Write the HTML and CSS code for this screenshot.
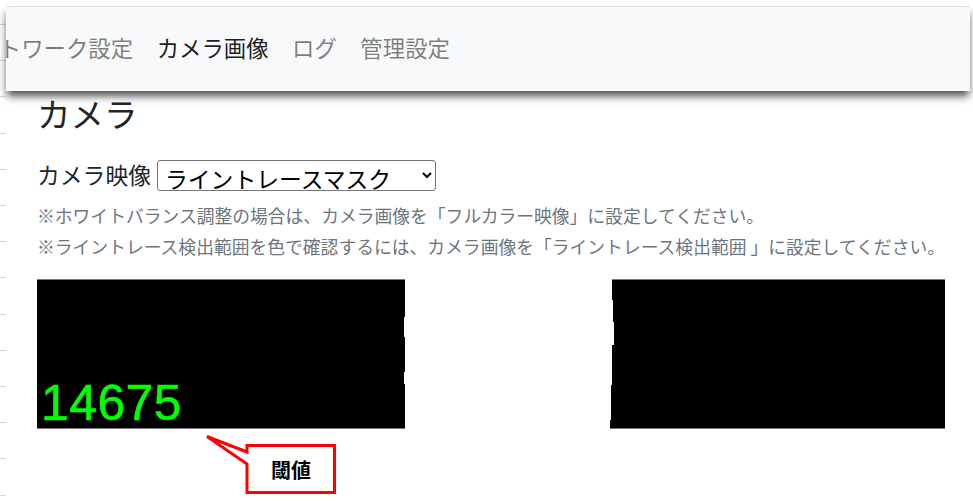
FILE: index.html
```html
<!DOCTYPE html>
<html lang="ja">
<head>
<meta charset="utf-8">
<title>カメラ</title>
<link rel="stylesheet" href="styles.css">
</head>
<body>
<nav class="navbar">
  <ul class="nav-list">
    <li class="nav-item">ネットワーク設定</li>
    <li class="nav-item active">カメラ画像</li>
    <li class="nav-item">ログ</li>
    <li class="nav-item">管理設定</li>
  </ul>
</nav>
<main class="content">
  <h1 class="title">カメラ</h1>
  <div class="form-row">
    <label class="label" for="cam">カメラ映像</label>
    <select id="cam" class="select">
      <option>ライントレースマスク</option>
    </select>
  </div>
  <p class="note">※ホワイトバランス調整の場合は、カメラ画像を「フルカラー映像」に設定してください。</p>
  <p class="note">※ライントレース検出範囲を色で確認するには、カメラ画像を「ライントレース検出範囲 」に設定してください。</p>
  <div class="images">
    <div class="cam-img left"><span class="value">14675</span></div>
    <div class="cam-img right"></div>
  </div>
  <div class="callout">
    <svg class="callout-shape" width="136" height="64" viewBox="0 0 136 64">
      <path d="M42 11.5 H129.5 V58.5 H42 V30 L2 2.5 L42 18 Z" fill="#fff" stroke="#ff0000" stroke-width="3" stroke-linejoin="miter"/>
    </svg>
    <span class="callout-text">閾値</span>
  </div>
</main>
</body>
</html>
```

FILE: styles.css
```css
* { box-sizing: border-box; }

html, body { height: 100%; }

body {
  margin: 0;
  padding-top: 6px;
  font-family: "Noto Sans CJK JP", "Noto Sans", sans-serif;
  color: #212529;
  background-color: #fff;
  background-image: repeating-linear-gradient(to bottom, transparent 0, transparent 24px, #d4d4d4 24px, #d4d4d4 25px, transparent 25px, transparent 36.2px);
  background-size: 6px 100%;
  background-repeat: no-repeat;
  overflow: hidden;
}

.navbar {
  position: relative;
  z-index: 2;
  margin: 0 3px 0 6px;
  height: 85px;
  padding-bottom: 3px;
  background: #f8f9fa;
  border-top: 1px solid #dcdfe2;
  box-shadow: 0 6px 8px -1px rgba(0, 0, 0, 0.7);
  overflow: hidden;
  display: flex;
  align-items: center;
}

.nav-list {
  list-style: none;
  display: flex;
  gap: 23.5px;
  margin: 0 0 0 -52px;
  padding: 0;
  font-size: 22.4px;
  line-height: 1;
  white-space: nowrap;
}

.nav-item { color: rgba(0, 0, 0, 0.5); }
.nav-item.active { color: rgba(0, 0, 0, 0.9); }

.content {
  position: relative;
  padding-left: 37px;
}

.title {
  margin: 2px 0 0;
  font-size: 33.5px;
  font-weight: 400;
  line-height: 40px;
  color: #212529;
}

.form-row {
  display: flex;
  align-items: center;
  gap: 6px;
  margin-top: 27px;
  height: 31px;
}

.label {
  font-size: 22.8px;
  line-height: 1;
  color: #212529;
}

.select {
  width: 279px;
  height: 31px;
  font-family: "Noto Sans CJK JP", sans-serif;
  font-size: 22.8px;
  padding: 0 3px;
  color: #000;
  background: #fff;
  border: 1px solid #767676;
  border-radius: 3px;
}

.note {
  margin: 0;
  font-size: 17.8px;
  line-height: 31px;
  color: #6c757d;
  white-space: nowrap;
}
.note:first-of-type { margin-top: 9px; }

.images {
  display: flex;
  gap: 205px;
  margin-top: 17px;
  height: 150px;
}

.cam-img {
  position: relative;
  height: 150px;
  background: #000;
  border-top: 1px solid #777;
  border-bottom: 1px solid #777;
}

.cam-img.left {
  width: 368px;
  clip-path: polygon(0 0, 368px 0, 368px 38px, 367px 38px, 367px 58px, 368px 58px, 368px 93px, 367px 93px, 367px 105px, 368px 105px, 368px 150px, 0 150px);
}

.cam-img.right {
  width: 335px;
  clip-path: polygon(2px 0, 335px 0, 335px 150px, 0 150px, 0 141px, 1px 141px, 1px 106px, 2px 106px, 2px 71px, 2px 71px, 2px 66px, 4px 66px, 4px 43px, 3px 43px, 3px 21px, 2px 21px);
}

.value {
  position: absolute;
  left: 4px;
  bottom: 0;
  font-family: "Liberation Sans", sans-serif;
  font-size: 50px;
  line-height: 50px;
  letter-spacing: 0.4px;
  color: #00ff00;
  -webkit-text-stroke: 0.6px #00ff00;
}

.callout {
  position: absolute;
  left: 205px;
  top: 341px;
  width: 136px;
  height: 64px;
}

.callout-shape { display: block; }

.callout-text {
  position: absolute;
  left: 42px;
  top: 11px;
  width: 88px;
  height: 48px;
  display: flex;
  align-items: center;
  justify-content: center;
  font-size: 20px;
  font-weight: 700;
  color: #000;
}
```
